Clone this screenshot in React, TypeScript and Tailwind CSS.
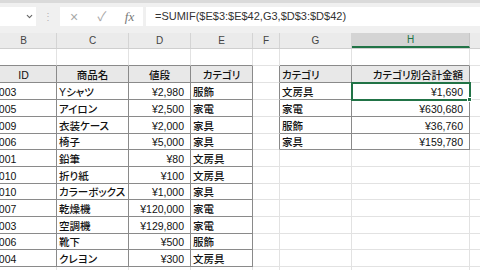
import { ChevronDown } from 'lucide-react';

const COLS = [66, 72, 62, 62, 27, 72, 118, 40];
const LETTERS = ['B', 'C', 'D', 'E', 'F', 'G', 'H', ''];
const HEIGHTS = [17, 17, 17, 17, 17, 16, 17, 17, 16, 17, 17, 16, 17, 17];

const items = [
  ['0003', 'Yシャツ', '¥2,980', '服飾'],
  ['0005', 'アイロン', '¥2,500', '家電'],
  ['0009', '衣装ケース', '¥2,000', '家具'],
  ['0006', '椅子', '¥5,000', '家具'],
  ['0001', '鉛筆', '¥80', '文房具'],
  ['0010', '折り紙', '¥100', '文房具'],
  ['0010', 'カラーボックス', '¥1,000', '家具'],
  ['0007', '乾燥機', '¥120,000', '家電'],
  ['0003', '空調機', '¥129,800', '家電'],
  ['0006', '靴下', '¥500', '服飾'],
  ['0004', 'クレヨン', '¥300', '文房具'],
];

const totals = [
  ['文房具', '¥1,690'],
  ['家電', '¥630,680'],
  ['服飾', '¥36,760'],
  ['家具', '¥159,780'],
];

type Cell = { t: string; a: 'l' | 'r' | 'c'; hd?: boolean };

function getCell(r: number, c: number): Cell {
  // r: excel row number (1-based), c: 0 = column B
  const empty: Cell = { t: '', a: 'l' };
  if (r === 2) {
    if (c === 0) return { t: 'ID', a: 'c', hd: true };
    if (c === 1) return { t: '商品名', a: 'c', hd: true };
    if (c === 2) return { t: '値段', a: 'c', hd: true };
    if (c === 3) return { t: 'カテゴリ', a: 'c', hd: true };
    if (c === 5) return { t: 'カテゴリ', a: 'l', hd: true };
    if (c === 6) return { t: 'カテゴリ別合計金額', a: 'r', hd: true };
  }
  const item = items[r - 3];
  if (item && c <= 3) return { t: item[c], a: c === 2 ? 'r' : 'l' };
  const tot = totals[r - 3];
  if (tot && (c === 5 || c === 6)) return { t: tot[c - 5], a: c === 6 ? 'r' : 'l' };
  return empty;
}

const inLeft = (r: number, c: number) => r >= 2 && r <= 13 && c <= 3;
const inRight = (r: number, c: number) => r >= 2 && r <= 6 && (c === 5 || c === 6);

export default function App() {
  return (
    <div className="w-[480px] h-[270px] overflow-hidden bg-white font-['Liberation_Sans','Noto_Sans_CJK_JP',sans-serif] text-[#111]">
      {/* formula bar */}
      <div className="h-[33px] bg-[#f0f0f0] border-t-[3px] border-[#dadada] flex items-start pt-[4px]">
        <div className="w-[36px] h-[19px] bg-white flex items-center justify-end pr-[2px] text-[#666]">
          <ChevronDown size={9} strokeWidth={3} />
        </div>
        <div className="w-[24px] h-[19px] flex items-center justify-center text-[#b5b5b5] text-[10px] leading-none">⋮</div>
        <div className="w-[83px] h-[19px] bg-white flex items-center text-[#a8a8a8]">
          <span className="w-[28px] text-center text-[14px] leading-none">×</span>
          <span className="w-[28px] text-center text-[13px] leading-none">✓</span>
          <span className="w-[27px] text-center text-[13px] leading-none italic font-['Liberation_Serif',serif] text-[#777]">fx</span>
        </div>
        <div className="flex-1 h-[19px] ml-[3px] bg-white flex items-center pl-[9px] text-[11px] text-[#333]">
          =SUMIF($E$3:$E$42,G3,$D$3:$D$42)
        </div>
      </div>

      <div className="-ml-[9px]">
        {/* column headers */}
        <div className="flex h-[16px] bg-[#ebebeb] border-b border-[#cfcfcf]">
          {COLS.map((w, c) => (
            <div
              key={c}
              style={{ width: w }}
              className={
                c === 6
                  ? 'shrink-0 h-full flex items-center justify-center text-[10px] bg-[#d4d4d4] text-[#217346] border-b-2 border-[#217346] border-r border-r-[#c6c6c6]'
                  : 'shrink-0 h-full flex items-center justify-center text-[10px] text-[#444] border-r border-[#d4d4d4]'
              }
            >
              {LETTERS[c]}
            </div>
          ))}
        </div>

        {/* grid rows */}
        {HEIGHTS.map((h, i) => {
          const r = i + 1;
          return (
            <div key={r} className="flex" style={{ height: h }}>
              {COLS.map((w, c) => {
                const cell = getCell(r, c);
                const darkR = inLeft(r, c) || inRight(r, c) || (c === 4 && r >= 2 && r <= 6);
                const darkB = inLeft(r, c) || inRight(r, c) || (r === 1 && (c <= 3 || c === 5 || c === 6));
                const selected = r === 3 && c === 6;
                return (
                  <div
                    key={c}
                    style={{ width: w }}
                    className={[
                      "shrink-0 h-full flex items-center pt-[2px] text-[10.5px] font-medium leading-none whitespace-nowrap [font-feature-settings:'palt'] border-r border-b",
                      darkR ? 'border-r-[#8a8a8a]' : 'border-r-[#e2e2e2]',
                      darkB ? 'border-b-[#8a8a8a]' : 'border-b-[#e2e2e2]',
                      cell.hd ? 'bg-[#e8e8e8]' : '',
                      cell.a === 'r' ? 'justify-end pr-[6px]' : cell.a === 'c' ? 'justify-center' : 'pl-[2px]',
                      selected ? 'relative z-10 outline-2 outline-[#217346] -outline-offset-1' : '',
                    ].join(' ')}
                  >
                    {cell.t}
                    {selected && (
                      <span className="absolute -right-[3px] -bottom-[3px] w-[5px] h-[5px] bg-[#217346] border border-white" />
                    )}
                  </div>
                );
              })}
            </div>
          );
        })}
      </div>
    </div>
  );
}
